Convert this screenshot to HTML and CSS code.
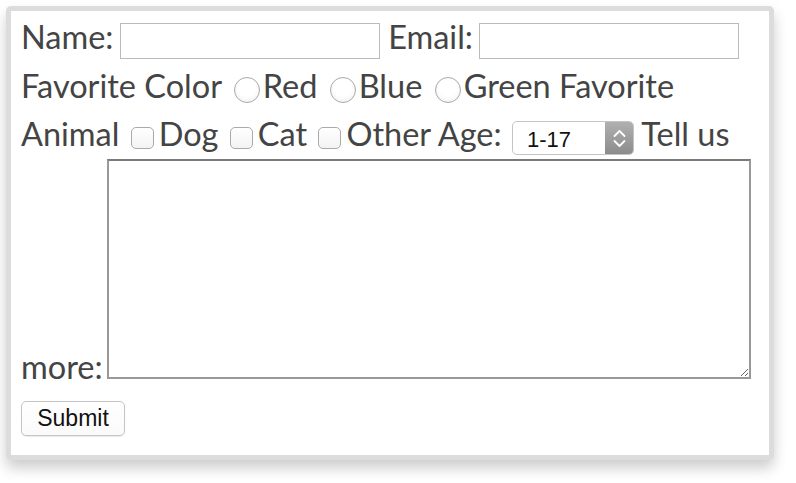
FILE: index.html
```html
<!DOCTYPE html>
<html>
<head>
<meta charset="utf-8">
<link rel="stylesheet" href="styles.css">
</head>
<body>
<form class="card">
  <div class="fields">
    Name: <input class="text-input" type="text"> Email: <input class="text-input" type="text">
    Favorite Color <input class="radio" type="radio" name="c">Red <input class="radio" type="radio" name="c">Blue <input class="radio" type="radio" name="c">Green
    Favorite Animal <input class="check" type="checkbox">Dog <input class="check" type="checkbox">Cat <input class="check" type="checkbox">Other
    Age: <span class="select-wrap"><select class="select"><option>1-17</option></select><span class="select-arrow"><svg width="28" height="32" viewBox="0 0 28 32"><path d="M9.5 14 L14.5 9 L19.5 14" fill="none" stroke="#fff" stroke-width="1.8" stroke-linecap="round" stroke-linejoin="round"/><path d="M9.5 19 L14.5 24 L19.5 19" fill="none" stroke="#fff" stroke-width="1.8" stroke-linecap="round" stroke-linejoin="round"/></svg></span></span>
    Tell us more: <textarea class="area"></textarea>
  </div>
  <div class="actions">
    <button class="submit" type="button">Submit</button>
  </div>
</form>
</body>
</html>
```
FILE: styles.css
```css
html, body {
  margin: 0;
  padding: 0;
  background: #fff;
}

body {
  padding-bottom: 20px;
}

.card {
  margin: 6px 0 0 6px;
  width: 738px;
  padding: 2px 10px 19px 10px;
  border: 5px solid #dcdcdc;
  border-radius: 5px;
  background: #fff;
  box-shadow: 0 8px 14px rgba(0, 0, 0, 0.2);
  font-family: Lato, "Liberation Sans", sans-serif;
  color: #444;
}

.fields {
  font-size: 32.5px;
  line-height: 48.5px;
}

.text-input {
  box-sizing: border-box;
  width: 260px;
  height: 36px;
  margin: 0 0 0 -2px;
  padding: 2px 6px;
  border: 1px solid #bbb;
  border-radius: 0;
  font-family: "Liberation Sans", sans-serif;
  font-size: 20px;
  vertical-align: 2px;
  background: #fff;
}

.radio {
  -webkit-appearance: none;
  appearance: none;
  box-sizing: border-box;
  width: 26px;
  height: 26px;
  margin: 0 3px 0 4px;
  border: 1px solid #aaa;
  border-radius: 50%;
  background: radial-gradient(circle at 50% 40%, #fff 45%, #ececec 100%);
  vertical-align: -5px;
}

.check {
  -webkit-appearance: none;
  appearance: none;
  box-sizing: border-box;
  width: 23px;
  height: 22px;
  margin: 0 5px 0 3px;
  border: 1px solid #aaa;
  border-radius: 5px;
  background: linear-gradient(#fff, #f3f3f3);
  vertical-align: -3px;
}

.select-wrap {
  position: relative;
  display: inline-block;
  vertical-align: -1px;
  margin-left: 2px;
  line-height: 0;
}

.select {
  -webkit-appearance: none;
  appearance: none;
  box-sizing: border-box;
  width: 122px;
  height: 34px;
  padding: 3px 0 0 14px;
  border: 1px solid #c4c4c4;
  border-radius: 5px;
  background: #fff;
  font-family: "Liberation Sans", sans-serif;
  font-size: 22px;
  color: #111;
}

.select-arrow {
  position: absolute;
  top: 1px;
  right: 1px;
  width: 28px;
  height: 32px;
  border-radius: 0 4px 4px 0;
  background: linear-gradient(#b0b0b0, #8c8c8c);
  overflow: hidden;
}

.select-arrow svg {
  display: block;
}

.area {
  box-sizing: border-box;
  width: 644px;
  height: 220px;
  margin: 0 0 0 -4px;
  padding: 2px;
  border: 2px solid #999;
  border-top-color: #7a7a7a;
  border-radius: 0;
  font-family: "Liberation Sans", sans-serif;
  font-size: 16px;
  vertical-align: baseline;
  resize: both;
}

.actions {
  padding-top: 10px;
}

.submit {
  box-sizing: border-box;
  width: 104px;
  height: 35px;
  padding: 0;
  border: 1px solid #c4c4c4;
  border-radius: 5px;
  background: linear-gradient(#fff, #fafafa);
  box-shadow: 0 1px 1px rgba(0, 0, 0, 0.08);
  font-family: "Liberation Sans", sans-serif;
  font-size: 23px;
  color: #111;
}
```
